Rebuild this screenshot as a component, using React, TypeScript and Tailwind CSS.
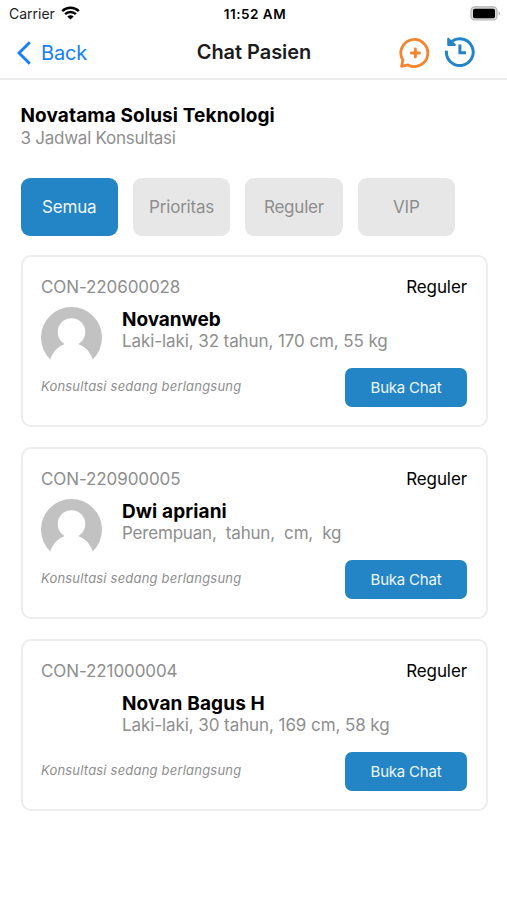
const filters = ["Semua", "Prioritas", "Reguler", "VIP"];

const consultations = [
  {
    code: "CON-220600028",
    type: "Reguler",
    name: "Novanweb",
    detail: "Laki-laki, 32 tahun, 170 cm, 55 kg",
    avatar: true,
    nameStyle: "tracking-[-0.05px]",
    detailStyle: "tracking-[-0.09px]",
  },
  {
    code: "CON-220900005",
    type: "Reguler",
    name: "Dwi apriani",
    detail: "Perempuan,  tahun,  cm,  kg",
    avatar: true,
    nameStyle: "tracking-[0.12px]",
    detailStyle: "tracking-[-0.19px]",
  },
  {
    code: "CON-221000004",
    type: "Reguler",
    name: "Novan Bagus H",
    detail: "Laki-laki, 30 tahun, 169 cm, 58 kg",
    avatar: false,
    nameStyle: "tracking-[0.14px]",
    detailStyle: "tracking-[-0.08px]",
  },
];

const WifiIcon = () => (
  <svg className="mb-[2px]" width="19" height="14" viewBox="0 0 19 14" fill="none" stroke="#000" strokeWidth="2.5">
    <path d="M1.2 5.2C5.8 .7 13.2 .7 17.8 5.2" />
    <path d="M4.1 8.2C7.1 5.3 11.9 5.3 14.9 8.2" />
    <path d="M9.5 13.6L6.3 10.5C8 8.9 11 8.9 12.7 10.5Z" fill="#000" stroke="none" />
  </svg>
);

const BatteryIcon = () => (
  <svg className="mb-[2px]" width="31" height="15" viewBox="0 0 31 15">
    <rect x="1" y=".8" width="26" height="13.2" rx="3.8" fill="#d8d8d8" stroke="#b4b4b4" strokeWidth="1.2" />
    <rect x="3" y="2.7" width="22" height="9.6" rx="1.8" fill="#000" />
    <path d="M28.6 5.2C30.6 6 30.6 8.8 28.6 9.6Z" fill="#b4b4b4" />
  </svg>
);

const NewChatIcon = () => (
  <svg width="32" height="32" viewBox="0 0 32 32" fill="none" stroke="#f5842c" strokeWidth="2.8" strokeLinecap="round" strokeLinejoin="round">
    <path d="M2.6 29.4L3.8 23A13.5 13.5 0 1 1 9 27.9Z" />
    <path d="M16.4 11.9V20.1M12.3 16H20.5" />
  </svg>
);

const HistoryIcon = () => (
  <svg className="mb-[2px]" width="32" height="32" viewBox="0 0 32 32" fill="none" stroke="#2384c6" strokeWidth="3">
    <path d="M2.5 14.6A13.4 13.4 0 1 0 7.8 5.4" />
    <path d="M4.2 2.6V9H10.9Z" fill="#2384c6" strokeWidth="2" strokeLinejoin="round" />
    <path d="M15.9 8.5V16.8H22" />
  </svg>
);

const Avatar = () => (
  <svg width="61" height="61" viewBox="0 0 61 61">
    <circle cx="30.5" cy="30.5" r="30.5" fill="#c2c2c2" />
    <circle cx="30.5" cy="25" r="13.8" fill="#fff" />
    <path d="M23 34H38V37.4C44.5 39.5 49.2 45 51.6 52V61H9.4V52C11.8 45 16.5 39.5 23 37.4Z" fill="#fff" />
  </svg>
);

const App = () => {
  return (
    <div className="min-h-[900px] w-full bg-white font-[Inter,sans-serif] text-black">
      <div className="grid h-7 grid-cols-3 items-center pl-[9px] pr-[6px]">
        <div className="flex items-center gap-[6px] text-[14px] leading-[18px] text-[#222]">
          <span>Carrier</span>
          <WifiIcon />
        </div>
        <div className="text-center text-[13.5px] font-semibold tracking-[0.5px] whitespace-nowrap">
          11:52 AM
        </div>
        <div className="flex justify-end">
          <BatteryIcon />
        </div>
      </div>

      <div className="grid h-[52px] grid-cols-3 items-center border-b-2 border-[#ececec] pl-[17px] pr-[31px]">
        <button className="flex items-center gap-[10px] pb-px text-[20px] tracking-[-0.2px] text-[#147efb]">
          <svg width="14" height="24" viewBox="0 0 14 24" fill="none" stroke="currentColor" strokeWidth="2.9">
            <path d="M12.8 1.2L2 12L12.8 22.8" />
          </svg>
          Back
        </button>
        <h1 className="whitespace-nowrap pb-[2px] pl-[15px] text-center text-[20px] font-semibold tracking-[-0.05px] text-[#1c1c1e]">
          Chat Pasien
        </h1>
        <div className="flex items-center justify-end gap-[13px] pb-px">
          <NewChatIcon />
          <HistoryIcon />
        </div>
      </div>

      <div className="pt-6 pl-[20.5px] pr-[19.5px]">
        <h2 className="text-[19px] leading-[23px] font-bold tracking-[0.12px]">
          Novatama Solusi Teknologi
        </h2>
        <p className="pt-px text-[17px] leading-[21px] tracking-[-0.25px] text-[#8e8e8e]">
          3 Jadwal Konsultasi
        </p>

        <div className="mt-[28.5px] flex gap-[15px]">
          {filters.map((filter, index) => (
            <button
              key={filter}
              className={`h-[58.5px] w-[97.4px] rounded-[9px] pt-px text-[17px] tracking-[-0.2px] ${
                index === 0 ? "bg-[#2384c6] text-[#f0f7fc]" : "bg-[#e7e7e7] text-[#8e8e8e]"
              }`}
            >
              {filter}
            </button>
          ))}
        </div>

        <div className="mt-[19px] flex flex-col gap-5">
          {consultations.map((item) => (
            <div
              key={item.code}
              className="h-[172px] rounded-[10px] border-2 border-[#ededed] px-[18.5px] pt-[19px]"
            >
              <div className="flex justify-between text-[17px] leading-[22px] tracking-[-0.1px]">
                <span className="text-[#8e8e8e]">{item.code}</span>
                <span>{item.type}</span>
              </div>
              <div className="mt-[9px] flex h-[61px] gap-5">
                <div className="w-[61px]">{item.avatar && <Avatar />}</div>
                <div className="pt-px">
                  <h3 className={`text-[19px] leading-[23px] font-bold ${item.nameStyle}`}>
                    {item.name}
                  </h3>
                  <p
                    className={`text-[17px] leading-[21px] whitespace-pre text-[#8e8e8e] ${item.detailStyle}`}
                  >
                    {item.detail}
                  </p>
                </div>
              </div>
              <div className="flex justify-between">
                <p className="pt-[9px] text-[13px] leading-[18px] tracking-[0.2px] text-[#8e8e8e] italic">
                  Konsultasi sedang berlangsung
                </p>
                <button className="h-[39px] w-[122px] rounded-[7px] bg-[#2384c6] pt-px text-[15px] tracking-[-0.2px] text-[#f0f7fc]">
                  Buka Chat
                </button>
              </div>
            </div>
          ))}
        </div>
      </div>
    </div>
  );
};

export default App;
